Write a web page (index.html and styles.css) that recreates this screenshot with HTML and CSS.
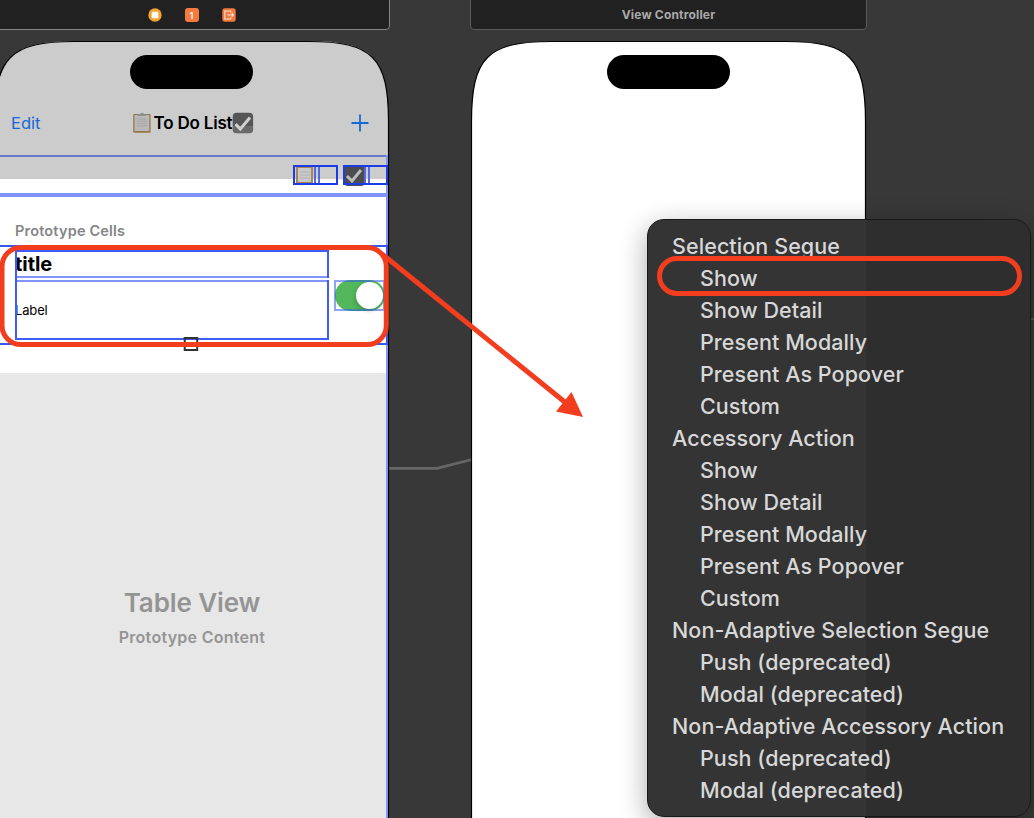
FILE: index.html
```html
<!DOCTYPE html>
<html lang="en">
<head>
<meta charset="utf-8">
<title>Storyboard</title>
<link rel="stylesheet" href="styles.css">
</head>
<body>
<main class="canvas">
  <svg class="layer" viewBox="0 0 1034 818">
    <path d="M389 468.3H437L472 459.5" fill="none" stroke="#666" stroke-width="2.8"/>
    <path d="M1029 319H1034" stroke="#555" stroke-width="2"/>
  </svg>

  <header class="scene-bar scene-bar-list">
    <svg class="dock-icon" viewBox="0 0 14 14"><circle cx="7" cy="7" r="6.7" fill="#f3a32f"/><rect x="3.7" y="3.7" width="6.6" height="6.6" rx="1" fill="#fff"/></svg>
    <span class="dock-badge">1</span>
    <svg class="dock-icon" viewBox="0 0 14 14"><rect x=".3" y=".3" width="13.4" height="13.4" rx="2.6" fill="#f47b3f"/><path d="M8.7 4.7V3H2.8V11H8.7V9.3M5.5 7H11.5M9.7 5.2L11.5 7L9.7 8.8" fill="none" stroke="#ffe0cc" stroke-width="1.1"/></svg>
  </header>
  <header class="scene-bar scene-bar-detail"><span class="scene-title">View Controller</span></header>

  <section class="phone phone-list">
    <div class="island"></div>
    <nav class="nav">
      <span class="nav-edit">Edit</span>
      <span class="nav-title">
        <svg class="emoji" viewBox="0 0 20 22"><rect x="1.2" y="2" width="17.4" height="18.7" rx="1" fill="#9a7548"/><rect x="2.5" y="3" width="14.8" height="16" fill="#b9b9b9"/><path d="M6 2.7L8 1.7Q10 0 12 1.7L14 2.7V4H6Z" fill="#8d9294"/><path d="M5 7H15M5 9.3H15M5 11.6H15M5 13.9H15" stroke="#a7a7a7"/></svg><span class="nav-name">To Do List</span><svg class="emoji emoji-check" viewBox="0 0 22 22"><rect x=".7" y=".7" width="20.4" height="20.6" rx="4" fill="#555"/><path d="M1 14H21V17Q21 21 17 21H5Q1 21 1 17Z" fill="#6a6a6a"/><path d="M3.6 12.1L8.3 17L18 5.5" fill="none" stroke="#d0d0d0" stroke-width="3"/></svg>
      </span>
      <svg class="plus" viewBox="0 0 18 18"><path d="M9 .5V17.5M.5 9H17.5" stroke="#1768d3" stroke-width="1.8"/></svg>
    </nav>
    <div class="toolbar-gap"></div>
    <div class="table-head">Prototype Cells</div>
    <div class="cell">
      <div class="cell-text"><strong class="cell-title">title</strong><span class="cell-label">Label</span></div>
      <div class="switch"><div class="knob"></div></div>
    </div>
    <div class="table-rest">
      <h2 class="rest-title">Table View</h2>
      <p class="rest-sub">Prototype Content</p>
    </div>
  </section>

  <section class="phone phone-detail"><div class="island"></div></section>

  <svg class="layer" viewBox="0 0 1034 818" fill="none">
    <path d="M-5.500 818V121.500C-5.500 57.500 10.500 41.500 74.500 41.500H308.500C372.500 41.500 388.500 57.500 388.500 121.500V818" stroke="#000" stroke-width="1.2"/>
    <path d="M471.500 818V121.500C471.500 57.500 487.500 41.500 551.500 41.500H785.500C849.500 41.500 865.500 57.500 865.500 121.500V818" stroke="#000" stroke-width="1.2"/>
    <path d="M0 156H387" stroke="#6879cf" stroke-width="2"/>
    <path d="M0 195H387" stroke="#8094fb" stroke-width="4"/>
    <path d="M387 155V818" stroke="#8094fb" stroke-width="2"/>
    <g><rect x="296" y="167" width="17" height="17" fill="#a88556"/><rect x="298" y="168" width="13" height="14" fill="#c9c9c9"/><path d="M300 172H310M300 175H310M300 178H310" stroke="#b2b2b2"/><rect x="344" y="165" width="21" height="21" rx="4" fill="#4c4c4e"/><path d="M347 176L352 181L361 170" stroke="#bbb" stroke-width="3"/></g>
    <path d="M315 165V185M319 165V185M365 165V185M369 165V185" stroke="#5369df" stroke-width="2"/>
    <path d="M294 166H387V184H294ZM337 166V184M344 166V184" stroke="#1c3ce6" stroke-width="2"/>
    <rect x="338" y="167" width="5" height="16" fill="#d0d0d0"/><rect x="338" y="179.500" width="5" height="6" fill="#fff"/><rect x="338" y="164.500" width="5" height="4" fill="#ccc"/>
    <path d="M0 246H387V344H0" stroke="#3656f5" stroke-width="2"/>
    <path d="M16 251H328V339H16Z" stroke="#3d5cf8" stroke-width="2"/>
    <path d="M17 277H327M17 281H327" stroke="#8094fb" stroke-width="2"/>
    <path d="M17 279H329" stroke="#fff" stroke-width="2"/>
    <rect x="335" y="281" width="49" height="29" stroke="#345be8" stroke-opacity=".55" stroke-width="2"/>
    <rect x="184.700" y="338" width="12.500" height="12" stroke="#333" stroke-width="2"/>
    <rect x="2" y="247.500" width="384.300" height="97" rx="19" stroke="#f33d1f" stroke-width="5"/>
    <path d="M382 254L566 403" stroke="#f33d1f" stroke-width="5"/>
    <path d="M583 417L571.500 392L556 411.500Z" fill="#f33d1f"/>
  </svg>

  <div class="menu">
    <h3 class="group">Selection Segue</h3>
    <ul class="items"><li>Show</li><li>Show Detail</li><li>Present Modally</li><li>Present As Popover</li><li>Custom</li></ul>
    <h3 class="group">Accessory Action</h3>
    <ul class="items"><li>Show</li><li>Show Detail</li><li>Present Modally</li><li>Present As Popover</li><li>Custom</li></ul>
    <h3 class="group">Non-Adaptive Selection Segue</h3>
    <ul class="items"><li>Push (deprecated)</li><li>Modal (deprecated)</li></ul>
    <h3 class="group">Non-Adaptive Accessory Action</h3>
    <ul class="items"><li>Push (deprecated)</li><li>Modal (deprecated)</li></ul>
    <div class="highlight"></div>
  </div>
</main>
</body>
</html>
```
FILE: styles.css
```css
* { box-sizing: border-box; }
body { margin: 0; font-family: Inter, "Liberation Sans", sans-serif; }
h2, h3, p, ul { margin: 0; padding: 0; font-weight: inherit; list-style: none; }
.canvas { position: relative; width: 1034px; height: 818px; overflow: hidden; background: #383838; }
.layer { position: absolute; left: 0; top: 0; width: 1034px; height: 818px; }

.scene-bar { position: absolute; top: -6px; height: 36px; display: flex; align-items: center; justify-content: center; padding-top: 6px; background: #212121; border: 1px solid #5a5a5a; border-radius: 4px; }
.scene-bar-list { left: -7px; width: 397px; gap: 23px; border-color: #858585; }
.scene-bar-detail { left: 470px; width: 397px; }
.scene-title { margin-top: -2px; color: #aaa; font-size: 12px; font-weight: 700; letter-spacing: .18px; }
.dock-icon, .dock-badge { width: 14px; height: 14px; }
.dock-badge { display: grid; place-items: center; border-radius: 3px; background: #f47b3f; color: #ffe9dc; font-size: 9px; font-weight: 700; }

.phone { position: absolute; top: 41px; width: 394px; height: 777px; display: flex; flex-direction: column; }
.phone-list { left: -5px; background: #ccc; clip-path: path("M0 777V80C0 16 16 0 80 0H313.500C377.500 0 393.500 16 393.500 80V777Z"); }
.phone-detail { left: 471px; background: #fff; clip-path: path("M.5 777V80.500C.5 16.500 16.500 .5 80.500 .5H314.500C378.500 .5 394.500 16.500 394.500 80.500V777Z"); }
.island { flex: none; width: 123px; height: 34px; margin: 14px 0 0 135px; border-radius: 17px; background: #000; }
.phone-detail .island { margin-left: 136px; }

.nav { flex: none; height: 67px; display: flex; align-items: center; justify-content: space-between; padding: 0 20px 0 16px; color: #1768d3; }
.nav-edit { width: 24px; font-size: 16.500px; letter-spacing: 0; }
.nav-title { display: flex; align-items: center; color: #000; }
.nav-name { margin-left: 2px; font-size: 17px; font-weight: 600; letter-spacing: -.2px; white-space: nowrap; }
.emoji { width: 20px; height: 22px; }
.emoji-check { width: 22px; }
.plus { width: 18px; height: 18px; }
.toolbar-gap { flex: none; height: 23px; }
.table-head { flex: none; height: 66px; padding: 42px 20px 0; background: #fff; color: #858588; font-size: 14.500px; font-weight: 600; line-height: 20px; letter-spacing: .18px; }
.cell { flex: none; height: 128px; display: flex; justify-content: space-between; padding: 5px 8px 0 20px; background: #fff; }
.cell-text { display: flex; flex-direction: column; }
.cell-title { height: 28px; font-size: 20px; line-height: 28px; letter-spacing: -.05px; }
.cell-label { padding-top: 22px; font-size: 13px; line-height: 20px; letter-spacing: -.15px; }
.switch { width: 50px; height: 31px; margin-top: 30px; margin-right: -4px; padding: 2px; display: flex; justify-content: flex-end; border-radius: 16px; background: #52b85b; }
.knob { width: 27px; height: 27px; border-radius: 50%; background: #fff; box-shadow: -1px 2px 4px #0003; }
.table-rest { flex: 1; padding: 212px 0 0; background: #e7e7e7; text-align: center; color: #949494; }
.rest-title { font-size: 26px; font-weight: 600; line-height: 36px; letter-spacing: -.1px; }
.rest-sub { margin-top: 6px; font-size: 16px; font-weight: 600; line-height: 20px; letter-spacing: .27px; }

.menu { position: absolute; left: 647px; top: 219px; width: 384px; height: 598px; padding: 10px 24px; border: 1px solid #191919; border-radius: 17px; background: linear-gradient(90deg, #343434 218px, #2e2e2e 218px); box-shadow: 0 8px 28px #0005; color: #d8d8d8; font-size: 21.500px; font-weight: 500; line-height: 32px; letter-spacing: .08px; white-space: nowrap; }
.group { font-size: inherit; }
.items { padding-left: 28px; }
.highlight { position: absolute; left: 9px; top: 36px; width: 365px; height: 40px; border: 5px solid #f33d1f; border-radius: 20px; }
```
